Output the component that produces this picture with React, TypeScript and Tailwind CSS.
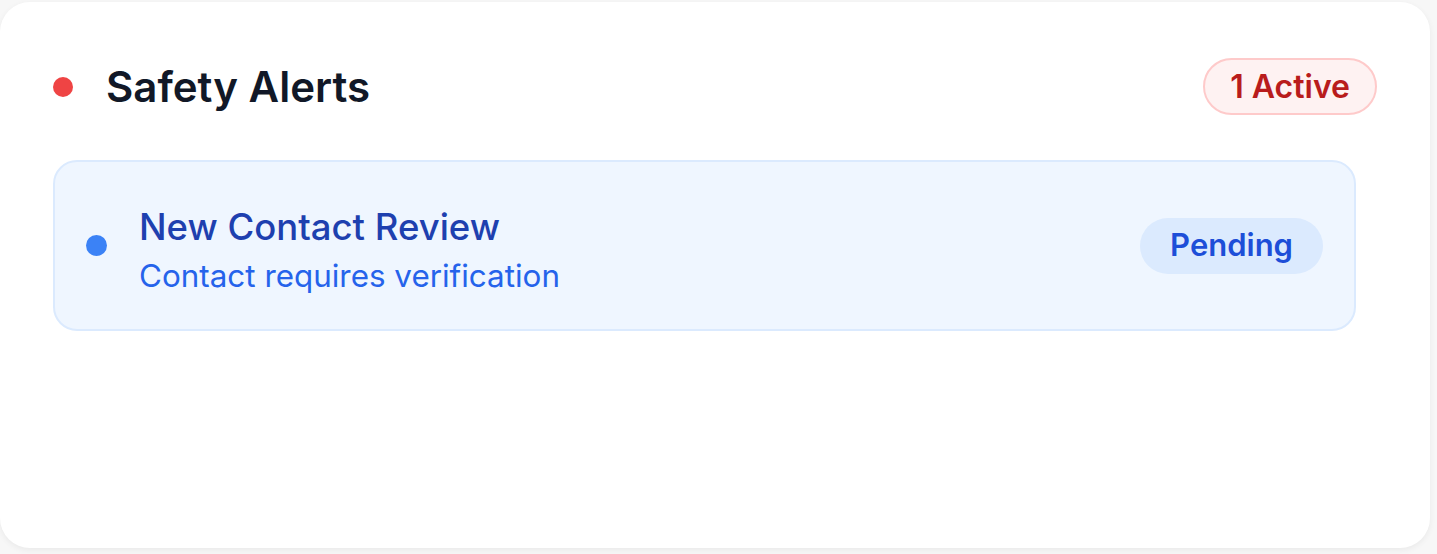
export default function App() {
  return (
    <div className="w-[1437px] h-[554px] bg-[#f7f7f7] pt-[2px]" style={{ fontFamily: 'Inter, "Noto Sans", sans-serif' }}>
      <div className="w-[1430px] h-[546px] rounded-[30px] bg-white shadow-[0_2px_6px_rgba(0,0,0,0.06)] pt-[56px] px-[53px]">
        <div className="flex items-center justify-between h-[57px]">
          <div className="flex items-center gap-[33px]">
            <span className="w-[20px] h-[20px] rounded-full bg-[#ef4444]" />
            <h2 className="text-[42px] font-semibold text-[#111827] leading-none">Safety Alerts</h2>
          </div>
          <span className="h-[57px] px-[25px] flex items-center rounded-full bg-[#fef2f2] border-2 border-[#fecaca] text-[#b91c1c] text-[32px] font-semibold">
            1 Active
          </span>
        </div>

        <div className="mt-[45px] mr-[21px] h-[171px] rounded-[24px] bg-[#eff6ff] border-2 border-[#dbeafe] pl-[31px] pr-[31px] flex items-center justify-between">
          <div className="flex items-center gap-[32px]">
            <span className="w-[21px] h-[21px] rounded-full bg-[#3b82f6]" />
            <div className="flex flex-col pt-[6px]">
              <span className="text-[36.5px] font-medium text-[#1e40af] leading-[55px]">New Contact Review</span>
              <span className="text-[31.4px] text-[#2563eb] leading-[42px]">Contact requires verification</span>
            </div>
          </div>
          <span className="h-[56px] px-[30px] flex items-center rounded-full bg-[#dbeafe] text-[#1d4ed8] text-[31px] font-semibold">
            Pending
          </span>
        </div>
      </div>
    </div>
  )
}
